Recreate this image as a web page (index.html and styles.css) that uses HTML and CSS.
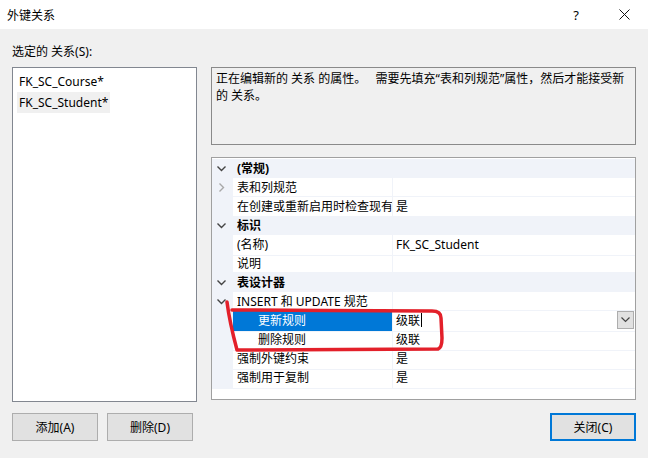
FILE: index.html
```html
<!DOCTYPE html>
<html lang="zh-CN">
<head>
    <meta charset="UTF-8">
    <title>外键关系</title>
    <link rel="stylesheet" href="styles.css">
</head>
<body>
    <div class="window">
        <div class="titlebar">
            <span class="title">外键关系</span>
            <span class="help">?</span>
            <svg class="close" width="11" height="11" viewBox="0 0 11 11">
                <path d="M0.5 0.5 L10.5 10.5 M10.5 0.5 L0.5 10.5" stroke="#111" stroke-width="1" fill="none"/>
            </svg>
        </div>

        <div class="content">
            <div class="list-label">选定的 关系(S):</div>

            <div class="panes">
                <div class="rel-list">
                    <div class="rel-item">FK_SC_Course*</div>
                    <div class="rel-item selected">FK_SC_Student*</div>
                </div>

                <div class="right-col">
                    <div class="desc">正在编辑新的 关系 的属性。&nbsp;&nbsp; 需要先填充“表和列规范”属性，然后才能接受新的 关系。</div>

                    <div class="grid">
                        <div class="row category">
                            <span class="gut"><svg width="9" height="6" viewBox="0 0 9 6"><path d="M0.5 0.5 L4.5 4.5 L8.5 0.5" stroke="#444" stroke-width="1.4" fill="none"/></svg></span>
                            <span class="name">(常规)</span>
                        </div>
                        <div class="row">
                            <span class="gut"><svg width="6" height="9" viewBox="0 0 6 9"><path d="M0.5 0.5 L4.5 4.5 L0.5 8.5" stroke="#a8a8a8" stroke-width="1.4" fill="none"/></svg></span>
                            <span class="name">表和列规范</span>
                            <span class="val"></span>
                        </div>
                        <div class="row">
                            <span class="gut"></span>
                            <span class="name">在创建或重新启用时检查现有</span>
                            <span class="val">是</span>
                        </div>
                        <div class="row category">
                            <span class="gut"><svg width="9" height="6" viewBox="0 0 9 6"><path d="M0.5 0.5 L4.5 4.5 L8.5 0.5" stroke="#444" stroke-width="1.4" fill="none"/></svg></span>
                            <span class="name">标识</span>
                        </div>
                        <div class="row">
                            <span class="gut"></span>
                            <span class="name">(名称)</span>
                            <span class="val">FK_SC_Student</span>
                        </div>
                        <div class="row">
                            <span class="gut"></span>
                            <span class="name">说明</span>
                            <span class="val"></span>
                        </div>
                        <div class="row category">
                            <span class="gut"><svg width="9" height="6" viewBox="0 0 9 6"><path d="M0.5 0.5 L4.5 4.5 L8.5 0.5" stroke="#444" stroke-width="1.4" fill="none"/></svg></span>
                            <span class="name">表设计器</span>
                        </div>
                        <div class="row">
                            <span class="gut"><svg width="9" height="6" viewBox="0 0 9 6"><path d="M0.5 0.5 L4.5 4.5 L8.5 0.5" stroke="#444" stroke-width="1.4" fill="none"/></svg></span>
                            <span class="name">INSERT 和 UPDATE 规范</span>
                            <span class="val"></span>
                        </div>
                        <div class="row active">
                            <span class="gut"></span>
                            <span class="name sub">更新规则</span>
                            <span class="val">级联<span class="caret"></span><span class="drop"><svg width="9" height="6" viewBox="0 0 9 6"><path d="M0.5 0.5 L4.5 4.5 L8.5 0.5" stroke="#444" stroke-width="1.2" fill="none"/></svg></span></span>
                        </div>
                        <div class="row">
                            <span class="gut"></span>
                            <span class="name sub">删除规则</span>
                            <span class="val">级联</span>
                        </div>
                        <div class="row">
                            <span class="gut"></span>
                            <span class="name">强制外键约束</span>
                            <span class="val">是</span>
                        </div>
                        <div class="row">
                            <span class="gut"></span>
                            <span class="name">强制用于复制</span>
                            <span class="val">是</span>
                        </div>
                    </div>
                </div>
            </div>

            <div class="buttons">
                <button class="btn">添加(A)</button>
                <button class="btn">删除(D)</button>
                <button class="btn btn-default">关闭(C)</button>
            </div>
        </div>

        <!-- red marker annotation drawn over the screenshot -->
        <svg class="markup" width="648" height="458" viewBox="0 0 648 458">
            <path d="M227 302 C 229 318, 233 335, 237 350 C 290 350, 380 349, 438 349 C 441 348, 442 345, 442 338 L 441 318 C 441 313, 438 311, 432 311 C 380 311, 290 310, 232 310"
                  stroke="#e3202a" stroke-width="3.5" fill="none" stroke-linecap="round" stroke-linejoin="round"/>
        </svg>
    </div>
</body>
</html>
```

FILE: styles.css
```css
* {
    margin: 0;
    padding: 0;
    box-sizing: border-box;
}

body {
    font-family: "Noto Sans", "Noto Sans CJK SC", sans-serif;
    font-size: 12px;
    color: #000;
    background: #f0f0f0;
}

.window {
    position: relative;
    width: 648px;
    height: 458px;
    overflow: hidden;
}

.titlebar {
    height: 29px;
    background: #fff;
    display: flex;
    align-items: center;
    padding-left: 7px;
}

.title {
    flex: 1;
    font-size: 12px;
}

.help {
    font-size: 13px;
    margin-right: 40px;
}

.close {
    margin-right: 18px;
}

.content {
    padding: 13px 12px 0 12px;
}

.list-label {
    height: 20px;
    line-height: 20px;
    margin-bottom: 5px;
}

.panes {
    display: flex;
    gap: 14px;
}

.rel-list {
    width: 185px;
    height: 335px;
    background: #fff;
    border: 1px solid #828790;
    padding: 3px 4px;
}

.rel-item {
    display: inline-block;
    height: 21px;
    line-height: 21px;
    padding: 0 2px;
}

.rel-item.selected {
    background: #f0f0f0;
}

.right-col {
    width: 425px;
    display: flex;
    flex-direction: column;
    gap: 12px;
}

.desc {
    height: 78px;
    border: 1px solid #8a8a8a;
    background: #f0f0f0;
    padding: 2px 10px 2px 4px;
    line-height: 17px;
}

.grid {
    height: 243px;
    border: 1px solid #a0a0a0;
    background: #fff;
    padding-top: 1px;
}

.row {
    display: grid;
    grid-template-columns: 21px 160px 1fr;
    height: 19px;
    line-height: 20px;
}

.gut {
    background: #f0f3f9;
    display: flex;
    align-items: center;
    justify-content: center;
    padding-right: 2px;
}

.name {
    padding-left: 4px;
    border-bottom: 1px solid #f0f3f9;
    border-right: 1px solid #f0f3f9;
    white-space: nowrap;
    overflow: hidden;
}

.name.sub {
    padding-left: 25px;
}

.val {
    position: relative;
    padding-left: 3px;
    border-bottom: 1px solid #f0f3f9;
}

.category {
    background: #f0f3f9;
}

.category .name {
    grid-column: 2 / 4;
    font-weight: bold;
    border: none;
}

.active .name {
    background: #0078d7;
    color: #fff;
}

.caret {
    display: inline-block;
    width: 1px;
    height: 14px;
    background: #000;
    vertical-align: -2px;
    margin-left: 1px;
}

.drop {
    position: absolute;
    right: 1px;
    top: 0;
    width: 17px;
    height: 18px;
    background: #e1e1e1;
    border: 1px solid #adadad;
    display: flex;
    align-items: center;
    justify-content: center;
}

.buttons {
    display: flex;
    gap: 9px;
    margin-top: 11px;
}

.btn {
    width: 86px;
    height: 28px;
    font-family: inherit;
    font-size: 12px;
    background: #e1e1e1;
    border: 1px solid #adadad;
    color: #000;
}

.btn-default {
    margin-left: auto;
    border: 2px solid #0078d7;
}

.markup {
    position: absolute;
    top: 0;
    left: 0;
    pointer-events: none;
}
```
